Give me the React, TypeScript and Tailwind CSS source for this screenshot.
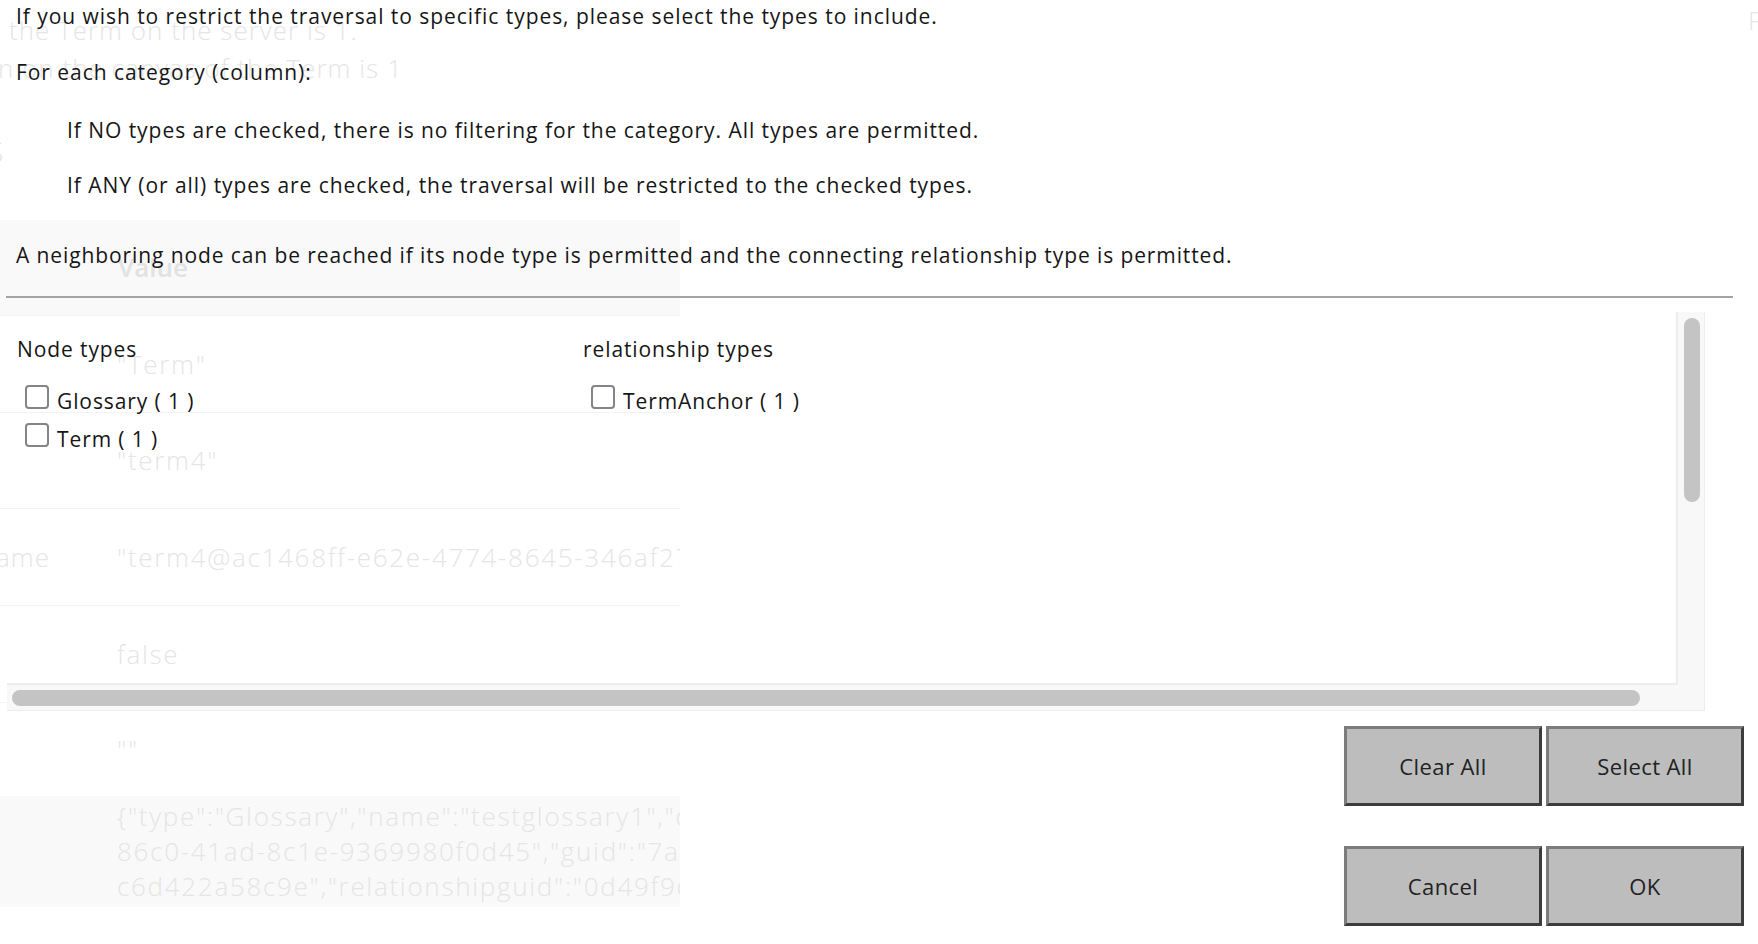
const ghostRows = [
  { label: "", value: '"Term"', h: "h-[97px]" },
  { label: "", value: '"term4"', h: "h-[96px]" },
  { label: "qualifiedName", value: '"term4@ac1468ff-e62e-4774-8645-346af27b1a05"', h: "h-[97px]" },
  { label: "", value: "false", h: "h-[97px]" },
  { label: "", value: '""', h: "h-[94px]" },
];

// page behind the dialog, seen faintly through it
function Backdrop() {
  return (
    <div className="pointer-events-none absolute inset-0 select-none font-['Open_Sans',sans-serif] font-light tracking-[1px] text-[#e5e5e5]">
      <div className="flex justify-between">
        <div className="flex flex-col">
          <p className="mt-[14px] ml-[9px] text-[26px] leading-8 whitespace-nowrap">the Term on the server is 1.</p>
          <p className="mt-[6px] -ml-[2px] text-[26px] leading-8 whitespace-nowrap">n on the canvas of the Term is 1</p>
          <p className="mt-[48px] -ml-[13px] text-[30px] leading-10">S</p>
        </div>
        <span className="mt-[4px] -mr-[4px] text-[26px] leading-8">F</span>
      </div>
      <div className="mt-[48px] w-[680px] overflow-hidden tracking-[1.7px]">
        <div className="flex h-[95px] items-center bg-[#f9f9f9] pl-[118px]">
          <span className="text-[26px] font-semibold tracking-normal text-[#e2e2e2]">Value</span>
        </div>
        {ghostRows.map((r, i) => (
          <div key={i} className={"flex items-center border-t border-[#f3f3f3] " + r.h}>
            <div className="flex w-[50px] shrink-0 justify-end overflow-hidden whitespace-nowrap text-[26px] tracking-[1px]">{r.label}</div>
            <div className="ml-[67px] shrink-0 whitespace-nowrap text-[26px]">{r.value}</div>
          </div>
        ))}
        <div className="flex h-[111px] flex-col justify-center bg-[#f9f9f9] pl-[117px] text-[26px] leading-[35px] whitespace-nowrap">
          <span>{'{"type":"Glossary","name":"testglossary1","displayName":"testglossary1"'}</span>
          <span>{'86c0-41ad-8c1e-9369980f0d45","guid":"7a3b0c12-77c1-4e1f-a3d0-'}</span>
          <span>{'c6d422a58c9e","relationshipguid":"0d49f9d1-2c77-4f2a"}'}</span>
        </div>
      </div>
    </div>
  );
}

function Check({ label }: { label: string }) {
  return (
    <div className="flex h-[38px] items-baseline gap-2 pl-2">
      <span className="inline-block h-6 w-6 shrink-0 rounded-[4px] border-2 border-[#858585] bg-white" />
      <span>{label}</span>
    </div>
  );
}

function Btn({ children }: { children: string }) {
  return (
    <button className="flex h-[80px] w-[198px] items-center justify-center border-[3px] border-t-[#7c7c7c] border-l-[#7c7c7c] border-r-[#3c3c3c] border-b-[#3c3c3c] bg-[#bdbdbd] text-[22px] tracking-[0.4px] text-[#222]">
      {children}
    </button>
  );
}

export default function App() {
  return (
    <div className="relative h-screen w-screen overflow-hidden bg-white font-['Open_Sans',sans-serif] text-[#161616]">
      <Backdrop />
      <div className="relative flex flex-col">
        <div className="pl-4 text-[21px] leading-7 tracking-[0.95px]">
          <p className="pt-[2px]">If you wish to restrict the traversal to specific types, please select the types to include.</p>
          <p className="mt-[28px]">For each category (column):</p>
          <p className="mt-[30px] pl-[51px]">If NO types are checked, there is no filtering for the category. All types are permitted.</p>
          <p className="mt-[27px] pl-[51px]">If ANY (or all) types are checked, the traversal will be restricted to the checked types.</p>
          <p className="mt-[42px] tracking-[0.9px]">A neighboring node can be reached if its node type is permitted and the connecting relationship type is permitted.</p>
        </div>
        <div className="ml-[6px] mt-[27px] h-[2px] w-[1727px] bg-[#a3a3a3]" />

        <div className="ml-[7px] mt-[14px] flex h-[399px] w-[1698px] flex-col border-r border-b border-[#ececec]">
          <div className="flex min-h-0 flex-1">
            <div className="flex flex-1 border-r-2 border-b-2 border-[#ececec] pt-[23px] pl-[10px] text-[21px] leading-7 tracking-[0.9px]">
              <div className="flex w-[566px] flex-col">
                <p className="mb-[22px]">Node types</p>
                <Check label="Glossary ( 1 )" />
                <Check label="Term ( 1 )" />
              </div>
              <div className="flex flex-col">
                <p className="mb-[22px]">relationship types</p>
                <Check label="TermAnchor ( 1 )" />
              </div>
            </div>
            <div className="w-[26px] bg-[#f8f8f8] pt-[6px] pl-[6px]">
              <div className="h-[184px] w-4 rounded-full bg-[#c4c4c4]" />
            </div>
          </div>
          <div className="flex h-[25px] items-center bg-[#f8f8f8] pl-[5px]">
            <div className="h-4 w-[1628px] rounded-full bg-[#c4c4c4]" />
          </div>
        </div>

        <div className="mt-[15px] flex justify-end gap-[4px] pr-[14px]">
          <Btn>Clear All</Btn>
          <Btn>Select All</Btn>
        </div>
        <div className="mt-[40px] flex justify-end gap-[4px] pr-[14px]">
          <Btn>Cancel</Btn>
          <Btn>OK</Btn>
        </div>
      </div>
    </div>
  );
}
